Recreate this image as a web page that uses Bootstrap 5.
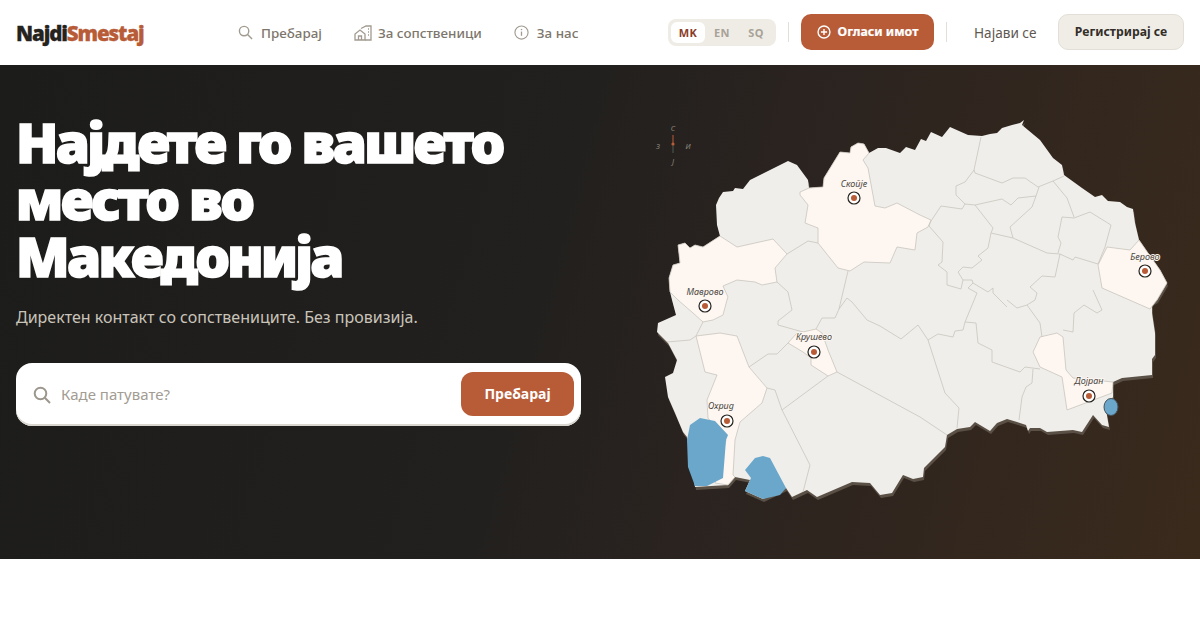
<!DOCTYPE html>
<html lang="mk">
<head>
  <meta charset="UTF-8" />
  <title>NajdiSmestaj</title>
  <meta name="viewport" content="width=device-width, initial-scale=1">
  <link href="https://cdn.jsdelivr.net/npm/bootstrap@5.3.3/dist/css/bootstrap.min.css" rel="stylesheet">
  <style>
    body { font-family: "Noto Sans", "Open Sans", sans-serif; background: #fff; }
    .top-bar { height: 65px; padding: 0 16px; background: #fff; }
    .brand-logo { font-family: "Noto Sans", sans-serif; font-weight: 900; font-size: 20.5px; letter-spacing: -1.1px; color: #26231f; text-decoration: none; width: 131px; line-height: 1; margin-top: 2px; -webkit-text-stroke: .3px currentColor; white-space: nowrap; }
    .brand-logo span { color: #b85c38; }
    .main-links { margin-left: 91px; margin-top: 1px; gap: 32px; }
    .main-link { display: flex; align-items: center; gap: 8px; padding: 0; color: #7d766c; font-size: 13.4px; font-weight: 500; text-decoration: none; }
    .main-link svg { width: 15px; height: 15px; }
    .main-link.with-house { gap: 6px; }
    .main-link.with-house svg { width: 18px; height: 16px; }
    .right-tools { margin-bottom: 1px; }
    .lang-pill { width: 108px; height: 27px; padding: 3px; background: #efece6; border-radius: 8px; }
    .lang-item { width: 34px; height: 21px; line-height: 21px; text-align: center; font-size: 11px; font-weight: 700; letter-spacing: .4px; color: #a8a297; border-radius: 6px; }
    .lang-item.on { background: #fff; color: #8a3d28; }
    .bar-sep { width: 1px; height: 20px; margin: 0 12px; background: #e3dfd8; }
    .post-btn { width: 133px; height: 36px; padding: 0; background: #b85c38; border: 0; border-radius: 10px; color: #fff; font-size: 12.4px; font-weight: 700; gap: 7px; -webkit-text-stroke: .2px #fff; }
    .post-btn svg { width: 14px; height: 14px; }
    .post-btn:hover { background: #a8502f; color: #fff; }
    .login-link { width: 62px; white-space: nowrap; color: #5e5850; font-size: 13.6px; margin: 2px 22px 0 15px; text-decoration: none; }
    .signup-btn { width: 126px; height: 36px; padding: 0; background: #f0ede7; border: 1px solid #e3dfd7; border-radius: 10px; color: #322e29; font-size: 12.2px; font-weight: 700; }
    .hero-band { height: 494px; background: linear-gradient(105deg, #1c1c1a 0%, #22201e 45%, #2a2320 60%, #3a2a1c 100%); overflow: hidden; }
    .hero-left { width: 640px; padding: 48px 0 0 16px; flex: none; }
    .hero-title { color: #fff; font-family: "Noto Sans", sans-serif; font-size: 55px; font-weight: 900; line-height: 57px; letter-spacing: -2.7px; -webkit-text-stroke: 1.6px #fff; margin: 0; width: 540px; }
    .hero-sub { color: #c9c4ba; font-size: 16px; margin: 21px 0 0; line-height: 24px; }
    .search-box { width: 565px; height: 63px; margin-top: 34px; padding: 0 7px 0 17px; background: #fff; border-radius: 16px; box-shadow: inset 0 -2px 0 #d9d6cf; gap: 10px; }
    .search-box svg { width: 18px; height: 18px; flex: none; }
    .search-input { border: 0; padding: 0; font-size: 15px; color: #444; background: transparent; box-shadow: none; }
    .search-input::placeholder { color: #a29c92; }
    .search-input:focus { box-shadow: none; }
    .search-btn { flex: none; width: 113px; height: 44px; margin-bottom: 2px; padding: 0; background: #b85c38; border: 0; border-radius: 12px; color: #fff; font-size: 14px; font-weight: 700; }
    .map-svg { display: block; flex: none; }
    .map-land { filter: drop-shadow(1px 3px 0 #5a5046); }
    .map-land polygon { fill: #efeeea; }
    .map-lite { fill: #fdf6f1; stroke: #c9c5bc; stroke-width: .8; }
    .map-line { fill: none; stroke: #c9c5bc; stroke-width: .8; }
    .map-lake { fill: #6aa7cb; }
    .pin-ring { fill: #fff; stroke: #26231f; stroke-width: 1.2; }
    .pin-dot { fill: #b85c38; }
    .pin-label { font-family: "Noto Sans", sans-serif; font-size: 9px; font-style: italic; fill: #4c4842; text-anchor: middle; paint-order: stroke; stroke: #fdf6f1; stroke-width: 2px; }
    .comp-label { font-family: "Noto Sans", sans-serif; font-size: 7.5px; font-style: italic; fill: #8b857b; text-anchor: middle; }
  </style>
</head>
<body>
  <nav class="top-bar d-flex align-items-center">
    <a class="brand-logo" href="#">Najdi<span>Smestaj</span></a>
    <div class="main-links d-flex align-items-center">
      <a class="main-link" href="#">
        <svg viewBox="0 0 16 16" fill="none" stroke="#a19a90" stroke-width="1.5"><circle cx="6.5" cy="6.5" r="5"/><path d="M10.2 10.2 15 15"/></svg>
        Пребарај
      </a>
      <a class="main-link with-house" href="#">
        <svg viewBox="0 0 18 16" fill="none" stroke="#a19a90" stroke-width="1.3"><path d="M1 15V9l5-4 5 4v6z"/><path d="M4.5 15v-4h3v4"/><path d="M7 3.5 12 1h5v14h-6"/><path d="M14 4h1M14 7h1M14 10h1" stroke-width="1.5"/></svg>
        За сопственици
      </a>
      <a class="main-link" href="#">
        <svg viewBox="0 0 16 16" fill="none" stroke="#a19a90" stroke-width="1.2"><circle cx="8" cy="8" r="7"/><path d="M8 7v4.5" stroke-width="1.4"/><path d="M8 4.2v1.3" stroke-width="1.5"/></svg>
        За нас
      </a>
    </div>
    <div class="right-tools d-flex align-items-center ms-auto">
      <div class="lang-pill d-flex">
        <span class="lang-item on">MK</span>
        <span class="lang-item">EN</span>
        <span class="lang-item">SQ</span>
      </div>
      <span class="bar-sep d-block"></span>
      <button class="btn post-btn d-flex align-items-center justify-content-center">
        <svg viewBox="0 0 16 16" fill="none" stroke="#fff" stroke-width="1.6"><circle cx="8" cy="8" r="6.8"/><path d="M8 4.5v7M4.5 8h7"/></svg>
        Огласи имот
      </button>
      <span class="bar-sep d-block"></span>
      <a class="login-link" href="#">Најави се</a>
      <button class="btn signup-btn">Регистрирај се</button>
    </div>
  </nav>

  <section class="hero-band d-flex">
    <div class="hero-left">
      <h1 class="hero-title">Најдете го вашето место во Македонија</h1>
      <p class="hero-sub">Директен контакт со сопствениците. Без провизија.</p>
      <div class="search-box d-flex align-items-center">
        <svg viewBox="0 0 18 18" fill="none" stroke="#9c968c" stroke-width="2"><circle cx="7.5" cy="7.5" r="5.8"/><path d="M11.8 11.8 17 17"/></svg>
        <input class="form-control search-input" placeholder="Каде патувате?">
        <button class="btn search-btn">Пребарај</button>
      </div>
    </div>

    <svg class="map-svg" width="560" height="494" viewBox="640 65 560 494">
      <!-- compass -->
      <line x1="673" y1="135" x2="673" y2="144" stroke="#b85c38" stroke-width="1"/>
      <line x1="673" y1="144" x2="673" y2="153" stroke="#4c5a50" stroke-width="1"/>
      <circle cx="673" cy="144" r="1.6" fill="#b85c38"/>
      <text class="comp-label" x="673" y="131">С</text>
      <text class="comp-label" x="658" y="149">З</text>
      <text class="comp-label" x="688" y="149">И</text>
      <text class="comp-label" x="673" y="164">Ј</text>

      <!-- land -->
      <g class="map-land">
        <polygon points="678,245 685,243 690,248 695,245 703,247 720,236 717,225 716,205 719,198 723,192 733,191 735,188 743,189 750,180 788,161 797,165 808,180 809,188 823,187 824,178 840,152 850,153 851,147 858,143 864,144 869,153 878,148 886,148 900,153 906,147 915,150 921,139 926,141 931,132 942,137 950,127 968,135 982,136 990,134 997,133 1002,128 1012,125 1020,123 1024,120 1022,125 1040,140 1053,158 1062,165 1064,175 1082,188 1095,197 1102,195 1108,201 1120,202 1127,207 1133,209 1135,223 1139,240 1148,253 1160,270 1167,283 1157,300 1152,303 1152,313 1155,333 1155,355 1152,359 1152,375 1122,378 1113,382 1113,397 1106,410 1109,427 1102,425 1093,415 1082,432 1073,430 1047,432 1040,428 1030,428 1028,431 1026,425 1017,422 1007,419 997,423 990,431 975,422 970,427 957,429 947,435 945,447 940,452 924,468 923,477 913,479 903,475 892,493 880,495 870,483 852,482 817,497 807,490 792,497 786,488 763,499 745,491 750,480 735,477 728,485 695,487 687,437 683,432 675,413 668,397 665,377 673,373 677,360 668,343 657,332 658,323 676,315 672,300 670,292 669,278 673,265 680,263"/>
      </g>

      <!-- highlighted regions -->
      <polygon class="map-lite" points="800,192 809,188 823,187 824,178 840,152 850,153 851,147 858,143 864,144 869,153 863,160 868,168 875,206 885,208 897,203 920,215 931,220 928,227 917,233 915,250 897,247 890,263 864,262 850,271 838,268 818,243 818,228 805,223 808,205 800,195"/>
      <polygon class="map-lite" points="678,245 685,243 690,248 695,245 703,247 720,236 737,247 773,239 787,254 775,268 777,282 762,285 755,282 737,280 723,286 728,297 727,300 723,315 713,320 703,322 693,313 678,300 670,292 669,278 673,265 680,263"/>
      <polygon class="map-lite" points="797,333 788,343 803,352 811,358 811,365 828,376 837,372 828,350 822,333 816,329 803,332"/>
      <polygon class="map-lite" points="696,336 720,333 737,336 749,367 767,388 762,403 740,422 735,440 733,475 735,477 728,485 715,483 726,440 708,418 707,400 717,375 705,372"/>
      <polygon class="map-lite" points="1040,337 1057,333 1063,337 1066,370 1073,378 1113,382 1112,393 1067,410 1062,377 1040,367 1033,352"/>
      <polygon class="map-lite" points="1098,265 1107,247 1130,250 1139,240 1148,253 1160,270 1167,283 1157,300 1150,309 1102,288"/>

      <!-- municipality borders -->
      <polyline class="map-line" points="981,137 974,170 975,173 1002,183 1013,178 1025,178 1038,187 1053,181 1064,176"/>
      <polyline class="map-line" points="974,170 965,182 956,186 956,195 965,204 962,209 941,206 931,221 929,226 943,242 942,262 938,265 947,272 947,285 961,289 963,280 958,272 963,267 972,268 982,260 978,256 988,248 991,233 993,228 975,205"/>
      <polyline class="map-line" points="965,204 975,205 1002,199 1011,205 1018,198 1036,196 1039,187"/>
      <polyline class="map-line" points="1036,196 1032,207 1010,227 1013,238"/>
      <polyline class="map-line" points="991,233 1013,238 1047,253 1060,254 1055,277 1042,276 1030,287 1037,293 1035,300 1027,305 1017,308 1007,300"/>
      <polyline class="map-line" points="1060,254 1073,260 1075,257 1098,264 1105,247 1111,225 1090,212 1074,218 1062,217 1058,237 1061,243 1058,253"/>
      <polyline class="map-line" points="1053,181 1067,198 1074,217"/>
      <polyline class="map-line" points="963,280 972,280 973,283 988,292 993,288 993,293 1007,307"/>
      <polyline class="map-line" points="973,283 968,288 977,293 970,310 965,322 976,323 978,343 992,350 992,362 1020,372 1025,367 1040,369"/>
      <polyline class="map-line" points="965,322 963,330 955,331 953,337 938,334 928,340 918,325 901,339 880,326 867,320 852,302 847,298 839,309 835,318 822,318 816,329"/>
      <polyline class="map-line" points="928,340 945,393 959,408 957,428"/>
      <polyline class="map-line" points="837,372 920,417 947,435"/>
      <polyline class="map-line" points="1033,369 1032,383 1026,387 1022,397 1019,420"/>
      <polyline class="map-line" points="1027,305 1040,323 1042,337"/>
      <polyline class="map-line" points="1063,330 1073,332 1074,313 1084,305 1097,313 1102,310 1093,290"/>
      <polyline class="map-line" points="787,254 808,241 818,243"/>
      <polyline class="map-line" points="848,271 839,309"/>
      <polyline class="map-line" points="777,282 788,292 792,310 778,321 778,325 803,332"/>
      <polyline class="map-line" points="696,336 690,340 667,342"/>
      <polyline class="map-line" points="696,336 703,322"/>
      <polyline class="map-line" points="749,367 768,354 777,354 788,343"/>
      <polyline class="map-line" points="767,388 775,390 782,410 810,465 803,492"/>
      <polyline class="map-line" points="782,410 828,376"/>

      <!-- lakes -->
      <polygon class="map-lake" points="690,425 700,418 715,421 728,435 726,440 723,478 707,486 695,486 688,467 687,440"/>
      <polygon class="map-lake" points="755,458 763,456 770,458 786,488 780,495 763,499 745,491 751,478 745,470"/>
      <ellipse class="map-lake" cx="1111" cy="407" rx="7" ry="8.5" stroke="#45525a" stroke-width="1"/>

      <!-- pins -->
      <g>
        <circle class="pin-ring" cx="854" cy="198" r="6"/><circle class="pin-dot" cx="854" cy="198" r="3"/>
        <text class="pin-label" x="854" y="187">Скопје</text>
        <circle class="pin-ring" cx="705" cy="306" r="6"/><circle class="pin-dot" cx="705" cy="306" r="3"/>
        <text class="pin-label" x="705" y="295">Маврово</text>
        <circle class="pin-ring" cx="814" cy="352" r="6"/><circle class="pin-dot" cx="814" cy="352" r="3"/>
        <text class="pin-label" x="814" y="340">Крушево</text>
        <circle class="pin-ring" cx="727" cy="421" r="6"/><circle class="pin-dot" cx="727" cy="421" r="3"/>
        <text class="pin-label" x="721" y="409">Охрид</text>
        <circle class="pin-ring" cx="1089" cy="396" r="6"/><circle class="pin-dot" cx="1089" cy="396" r="3"/>
        <text class="pin-label" x="1089" y="384">Дојран</text>
        <circle class="pin-ring" cx="1145" cy="271" r="6"/><circle class="pin-dot" cx="1145" cy="271" r="3"/>
        <text class="pin-label" x="1145" y="260">Берово</text>
      </g>
    </svg>
  </section>
</body>
</html>
